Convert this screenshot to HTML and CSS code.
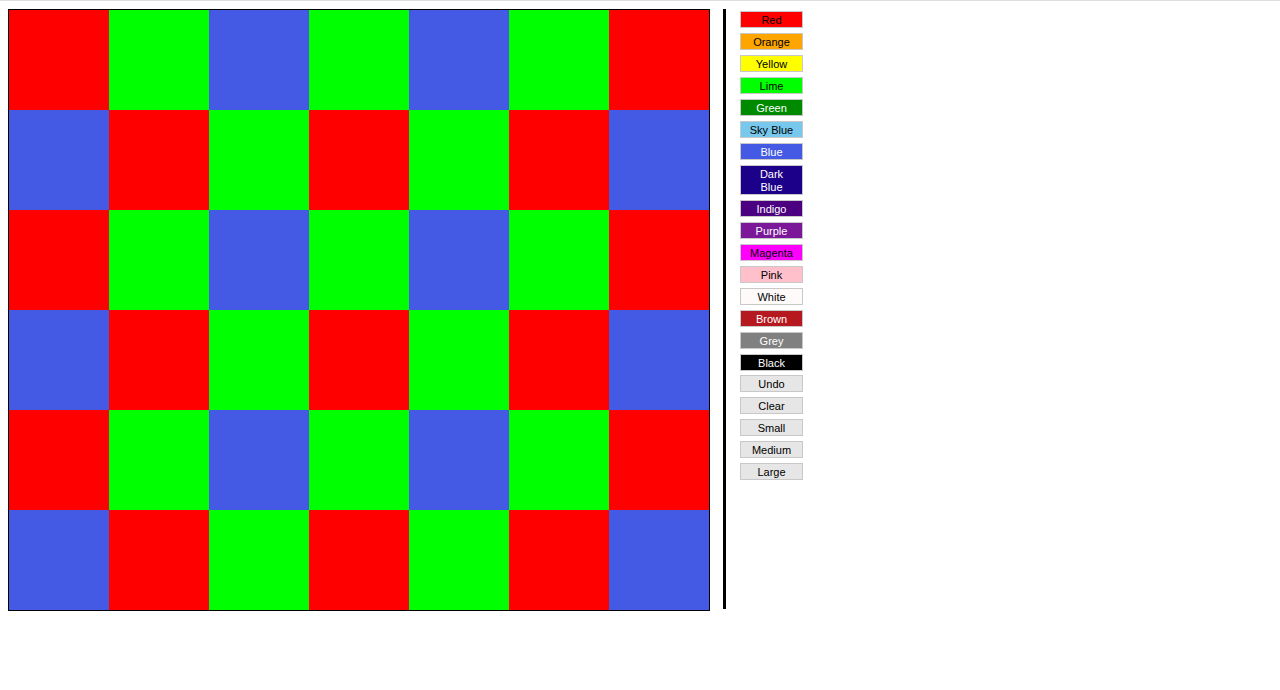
FILE: index.html
```html
<!DOCTYPE html>
<html>
<head>
<meta charset="utf-8">
<link rel="stylesheet" href="styles.css">
</head>
<body>
<div class="board">
  <div class="c r"></div><div class="c g"></div><div class="c b"></div><div class="c g"></div><div class="c b"></div><div class="c g"></div><div class="c r"></div>
  <div class="c b"></div><div class="c r"></div><div class="c g"></div><div class="c r"></div><div class="c g"></div><div class="c r"></div><div class="c b"></div>
  <div class="c r"></div><div class="c g"></div><div class="c b"></div><div class="c g"></div><div class="c b"></div><div class="c g"></div><div class="c r"></div>
  <div class="c b"></div><div class="c r"></div><div class="c g"></div><div class="c r"></div><div class="c g"></div><div class="c r"></div><div class="c b"></div>
  <div class="c r"></div><div class="c g"></div><div class="c b"></div><div class="c g"></div><div class="c b"></div><div class="c g"></div><div class="c r"></div>
  <div class="c b"></div><div class="c r"></div><div class="c g"></div><div class="c r"></div><div class="c g"></div><div class="c r"></div><div class="c b"></div>
</div>
<div class="divider"></div>
<div class="tools">
  <button class="btn red">Red</button>
  <button class="btn orange">Orange</button>
  <button class="btn yellow">Yellow</button>
  <button class="btn lime">Lime</button>
  <button class="btn green light">Green</button>
  <button class="btn sky">Sky Blue</button>
  <button class="btn blue light">Blue</button>
  <button class="btn darkblue light">Dark Blue</button>
  <button class="btn indigo light">Indigo</button>
  <button class="btn purple light">Purple</button>
  <button class="btn magenta">Magenta</button>
  <button class="btn pink">Pink</button>
  <button class="btn white">White</button>
  <button class="btn brown light">Brown</button>
  <button class="btn grey light">Grey</button>
  <button class="btn black light">Black</button>
  <button class="btn ctrl first">Undo</button>
  <button class="btn ctrl">Clear</button>
  <button class="btn ctrl">Small</button>
  <button class="btn ctrl">Medium</button>
  <button class="btn ctrl">Large</button>
</div>
</body>
</html>
```

FILE: styles.css
```css
html {
  border-top: 1px solid #dddddd;
  background: #ffffff;
}
body {
  margin: 8px;
  display: flex;
  align-items: flex-start;
  font-family: "Liberation Sans", Arial, sans-serif;
}
.board {
  display: grid;
  grid-template-columns: repeat(7, 100px);
  grid-template-rows: repeat(6, 100px);
  border: 1px solid #000000;
  flex: none;
}
.c { width: 100px; height: 100px; }
.r { background: #ff0000; }
.g { background: #00ff00; }
.b { background: #445ae4; }
.divider {
  width: 3px;
  height: 600px;
  background: #000000;
  margin-left: 13px;
  flex: none;
}
.tools {
  margin-left: 14px;
  margin-top: 2px;
  display: flex;
  flex-direction: column;
  gap: 5px;
  width: 63px;
}
.btn {
  width: 63px;
  box-sizing: border-box;
  border: 1px solid #c8c8c8;
  padding: 2px 7px 0;
  margin: 0;
  font-family: "Liberation Sans", Arial, sans-serif;
  font-size: 11px;
  line-height: 13px;
  color: #000000;
  text-align: center;
  border-radius: 0;
  white-space: normal;
}
.light { color: #ffffff; }
.red { background: #ff0000; }
.orange { background: #ffa500; }
.yellow { background: #ffff00; }
.lime { background: #00ff00; }
.green { background: #008a00; }
.sky { background: #78c8ee; }
.blue { background: #445ae4; }
.darkblue { background: #1c0089; }
.indigo { background: #4b0082; }
.purple { background: #7a1899; }
.magenta { background: #ff00ff; }
.pink { background: #ffc0cb; }
.white { background: #fffafa; }
.brown { background: #b5181e; }
.grey { background: #808080; }
.black { background: #000000; }
.ctrl { background: #e6e6e6; }
.first { margin-top: -1px; }
```
